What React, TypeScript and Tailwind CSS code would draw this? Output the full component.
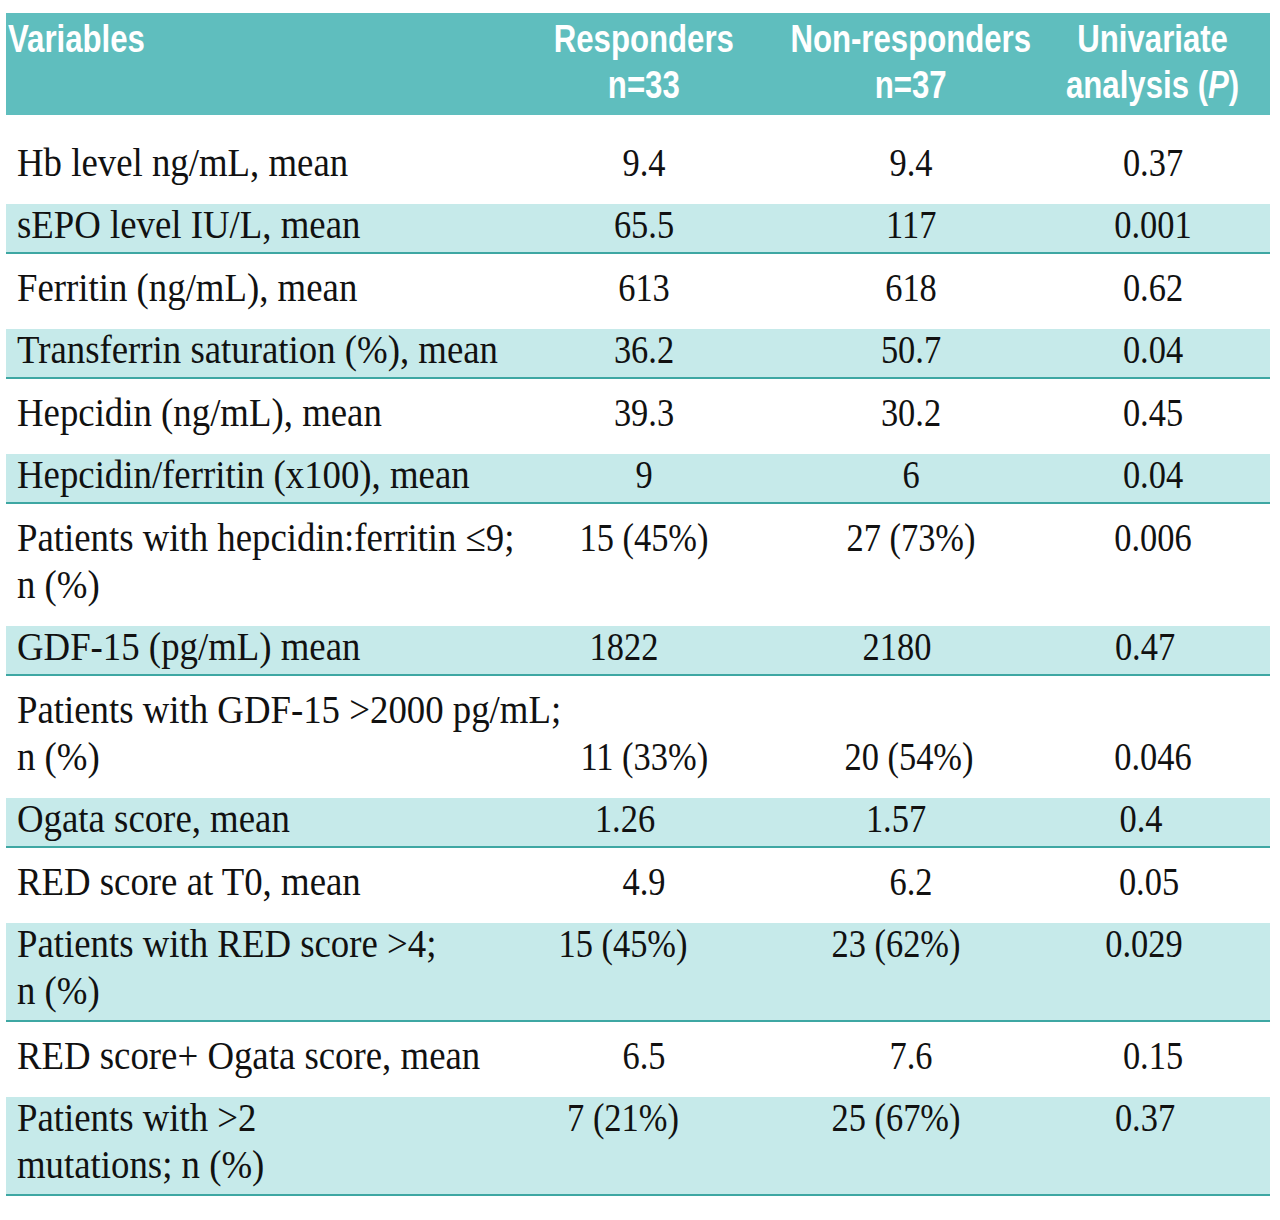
import type { ReactNode } from "react";

type Row = {
  label: string[];
  vals: [string, string, string];
  shade?: boolean;
  first?: boolean;
  low?: boolean;
  pads?: [string, string, string];
};

const rows: Row[] = [
  { label: ["Hb level ng/mL, mean"], vals: ["9.4", "9.4", "0.37"], first: true },
  { label: ["sEPO level IU/L, mean"], vals: ["65.5", "117", "0.001"], shade: true },
  { label: ["Ferritin (ng/mL), mean"], vals: ["613", "618", "0.62"] },
  { label: ["Transferrin saturation (%), mean"], vals: ["36.2", "50.7", "0.04"], shade: true },
  { label: ["Hepcidin (ng/mL), mean"], vals: ["39.3", "30.2", "0.45"] },
  { label: ["Hepcidin/ferritin (x100), mean"], vals: ["9", "6", "0.04"], shade: true },
  {
    label: ["Patients with hepcidin:ferritin \u22649;", "n (%)"],
    vals: ["15 (45%)", "27 (73%)", "0.006"],
  },
  {
    label: ["GDF-15 (pg/mL) mean"],
    vals: ["1822", "2180", "0.47"],
    shade: true,
    pads: ["pr-[40px]", "pr-[28px]", "pr-[16px]"],
  },
  {
    label: ["Patients with GDF-15 >2000 pg/mL;", "n (%)"],
    vals: ["11 (33%)", "20 (54%)", "0.046"],
    low: true,
    pads: ["", "pr-[4px]", ""],
  },
  {
    label: ["Ogata score, mean"],
    vals: ["1.26", "1.57", "0.4"],
    shade: true,
    pads: ["pr-[38px]", "pr-[30px]", "pr-[24px]"],
  },
  {
    label: ["RED score at T0, mean"],
    vals: ["4.9", "6.2", "0.05"],
    pads: ["", "", "pr-[8px]"],
  },
  {
    label: ["Patients with RED score >4;", "n (%)"],
    vals: ["15 (45%)", "23 (62%)", "0.029"],
    shade: true,
    pads: ["pr-[42px]", "pr-[30px]", "pr-[18px]"],
  },
  { label: ["RED score+ Ogata score, mean"], vals: ["6.5", "7.6", "0.15"] },
  {
    label: ["Patients with >2", "mutations; n (%)"],
    vals: ["7 (21%)", "25 (67%)", "0.37"],
    shade: true,
    pads: ["pr-[42px]", "pr-[30px]", "pr-[16px]"],
  },
];

const grid = "grid w-[1264px] grid-cols-[524px_228px_306px_178px]";

function HeadCell({ children, left }: { children: ReactNode; left?: boolean }) {
  return (
    <div className={left ? "pl-[2px]" : "flex justify-center text-center"}>
      <span
        className={
          "inline-block shrink-0 whitespace-nowrap scale-x-[0.82] " +
          (left ? "origin-left" : "origin-center")
        }
      >
        {children}
      </span>
    </div>
  );
}

function BodyRow({ row }: { row: Row }) {
  const shift = row.shade ? "-translate-y-[3px]" : "";
  const two = row.label.length > 1;
  const rowCls = row.shade
    ? "bg-[#c6eaea] border-b-2 border-[#3ea7a3] " + (two ? "pb-[3px]" : "pb-[1px]")
    : (row.first ? "pt-[24px]" : "pt-[10px]") + " pb-[18px]";
  return (
    <div className={grid + " " + rowCls}>
      <div className={"pl-[11px] " + shift}>
        <div className="inline-block origin-left scale-x-[0.92] whitespace-nowrap">
          {row.label.map((l) => (
            <div key={l}>{l}</div>
          ))}
        </div>
      </div>
      {row.vals.map((v, i) => (
        <div
          key={i}
          className={
            "flex justify-center " +
            shift +
            " " +
            (row.low ? "self-end " : "self-start ") +
            (row.pads ? row.pads[i] : "")
          }
        >
          <span className="inline-block shrink-0 scale-x-[0.86] whitespace-nowrap">{v}</span>
        </div>
      ))}
    </div>
  );
}

export default function App() {
  return (
    <div className="min-h-[1220px] bg-white pl-[6px] pt-[13px]">
      <div
        className={
          grid +
          " bg-[#5fbebe] pt-[3px] pb-[7px] font-['Liberation_Sans',Arial,sans-serif] text-[38px] font-bold leading-[46px] text-white"
        }
      >
        <HeadCell left>Variables</HeadCell>
        <HeadCell>
          Responders
          <br />
          n=33
        </HeadCell>
        <HeadCell>
          Non-responders
          <br />
          n=37
        </HeadCell>
        <HeadCell>
          Univariate
          <br />
          analysis (<i>P</i>)
        </HeadCell>
      </div>
      <div className="font-['Liberation_Serif','Times_New_Roman',serif] text-[40px] leading-[47px] text-[#111]">
        {rows.map((r) => (
          <BodyRow key={r.label.join(" ")} row={r} />
        ))}
      </div>
    </div>
  );
}
